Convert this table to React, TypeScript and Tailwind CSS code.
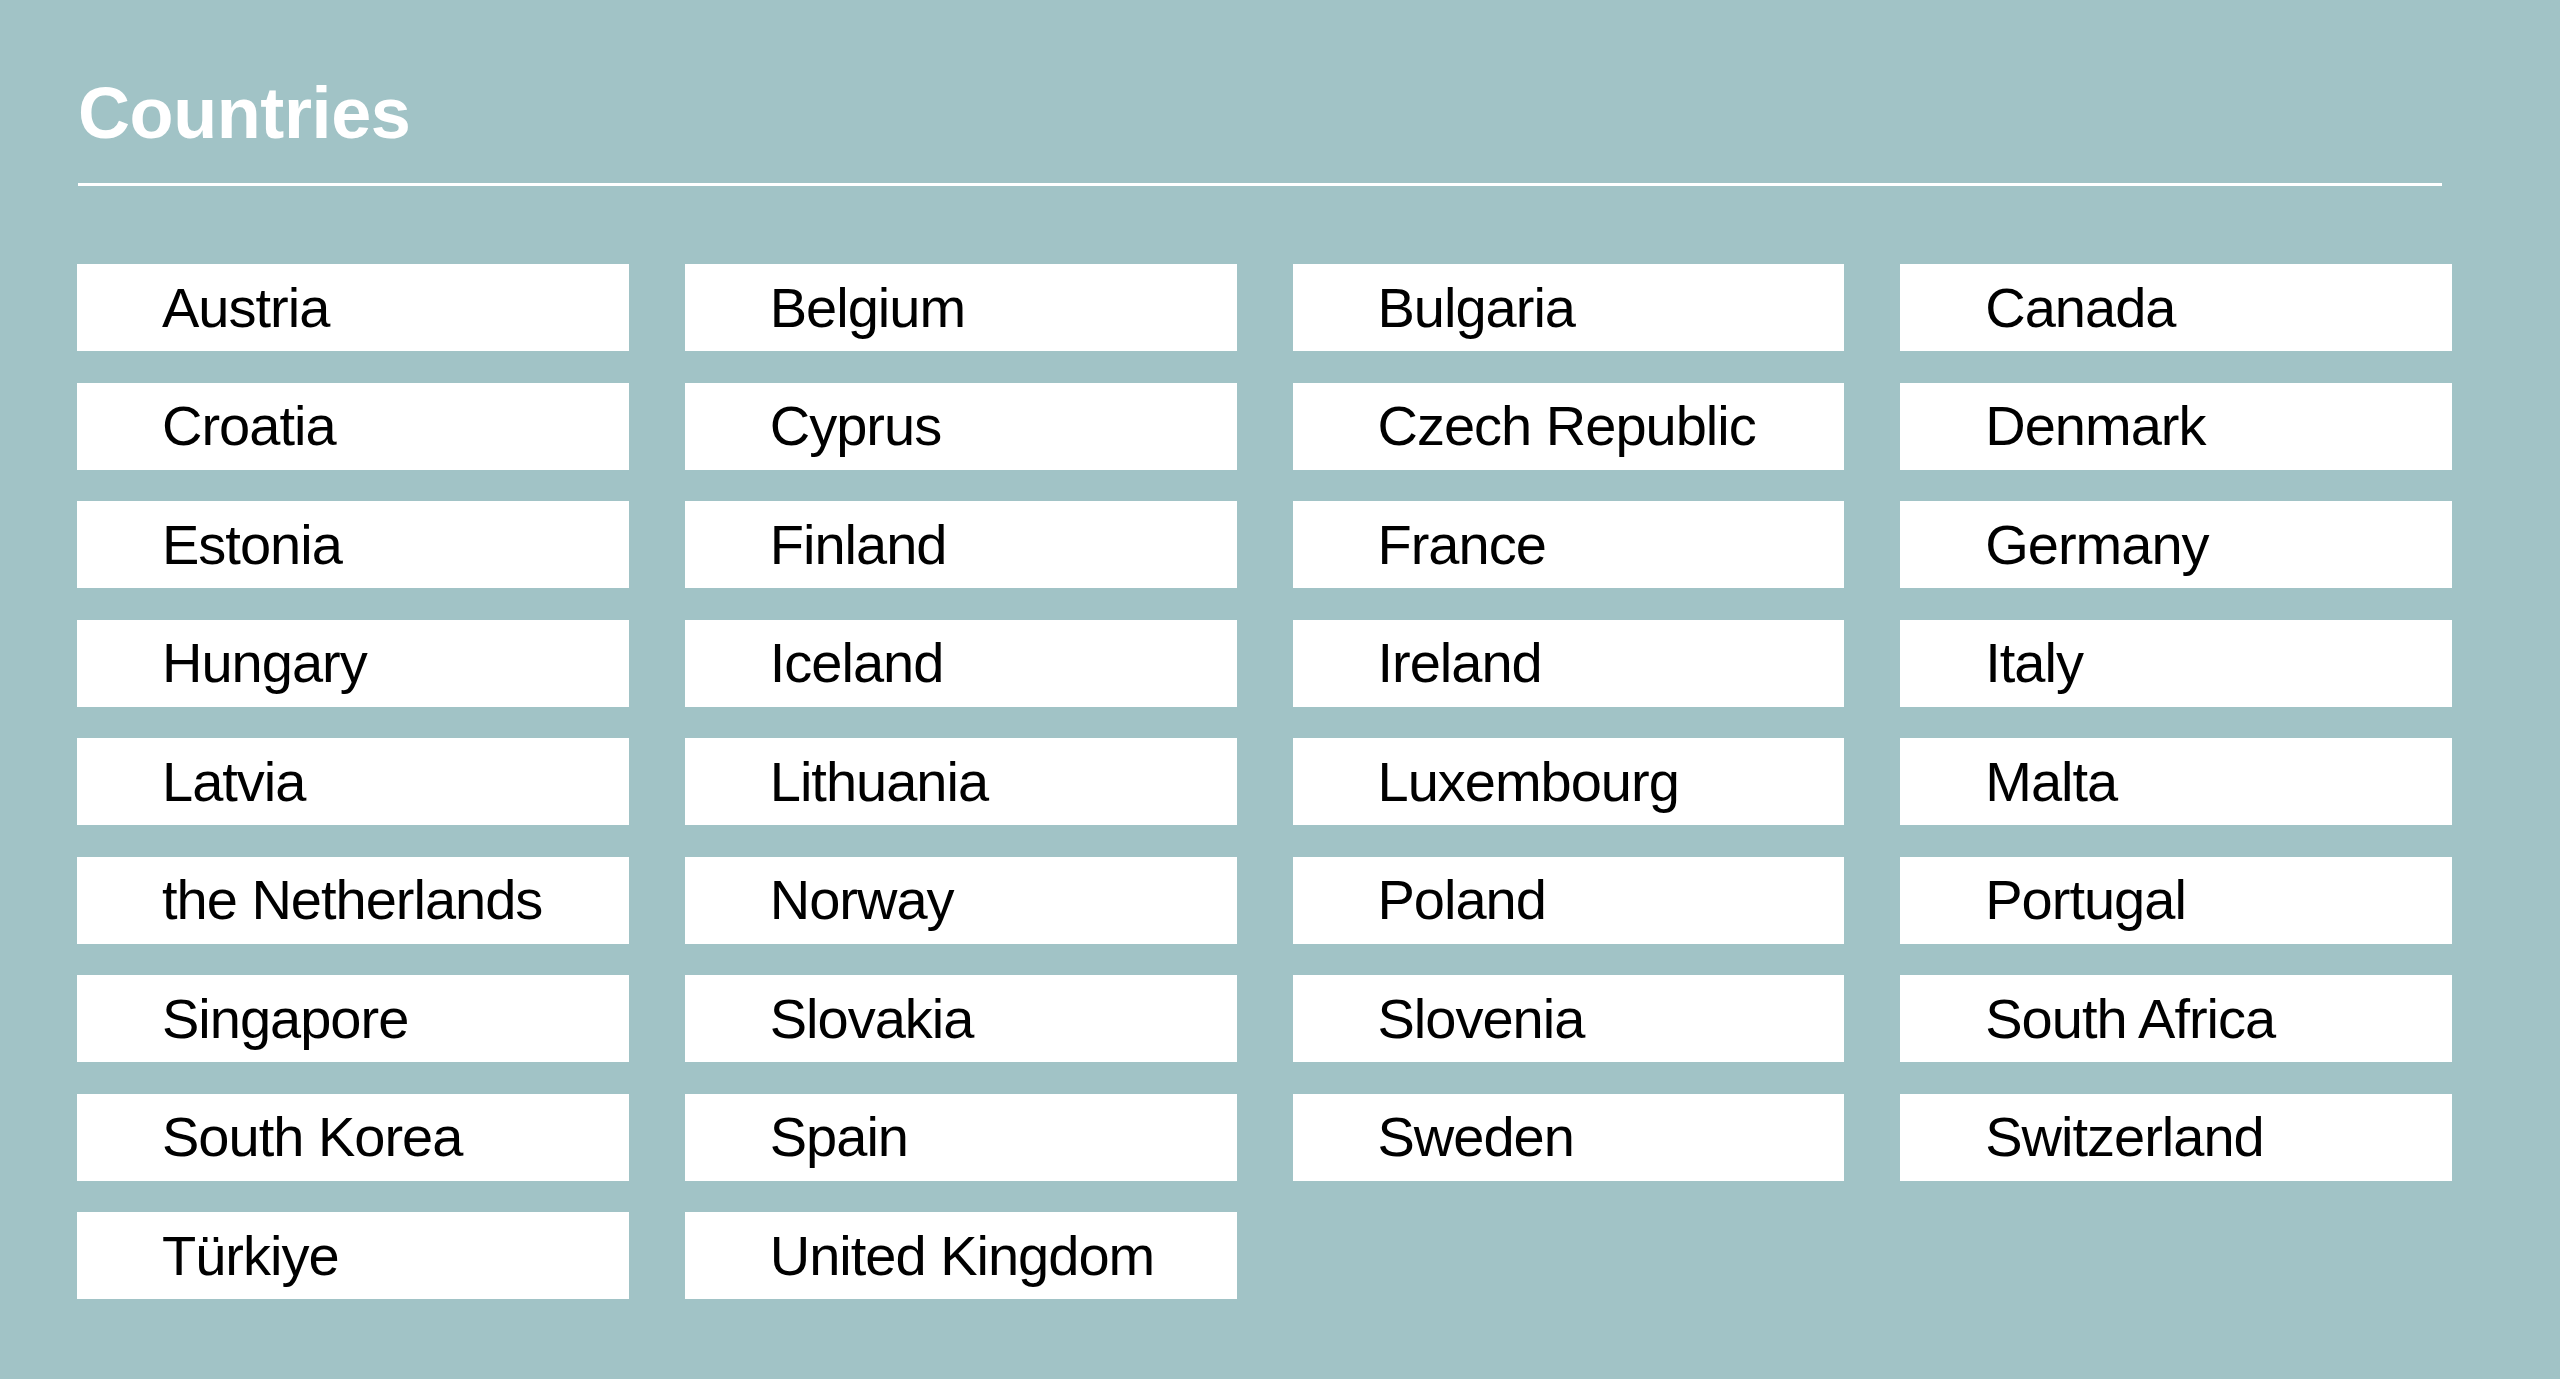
import React from "react";

const countries = [
  "Austria", "Belgium", "Bulgaria", "Canada",
  "Croatia", "Cyprus", "Czech Republic", "Denmark",
  "Estonia", "Finland", "France", "Germany",
  "Hungary", "Iceland", "Ireland", "Italy",
  "Latvia", "Lithuania", "Luxembourg", "Malta",
  "the Netherlands", "Norway", "Poland", "Portugal",
  "Singapore", "Slovakia", "Slovenia", "South Africa",
  "South Korea", "Spain", "Sweden", "Switzerland",
  "Türkiye", "United Kingdom",
];

export default function App() {
  return (
    <div
      className="min-h-[1379px] w-full bg-[#a1c3c6] pl-[77px] pt-[77px]"
      style={{ fontFamily: '"Liberation Sans", Arial, Helvetica, sans-serif' }}
    >
      <h1 className="ml-[1px] text-[72px] font-bold leading-none tracking-[-0.4px] text-white">Countries</h1>
      <div className="ml-[1px] mt-[34px] h-[3px] w-[2364px] bg-white" />
      <div className="mt-[78px] grid w-[2375px] grid-cols-4 gap-x-[56px] gap-y-[31.5px]">
        {countries.map((c) => (
          <div
            key={c}
            className="flex h-[87px] items-center bg-white pl-[85px] text-[56px] leading-none tracking-[-1px] text-black"
          >
            {c}
          </div>
        ))}
      </div>
    </div>
  );
}
